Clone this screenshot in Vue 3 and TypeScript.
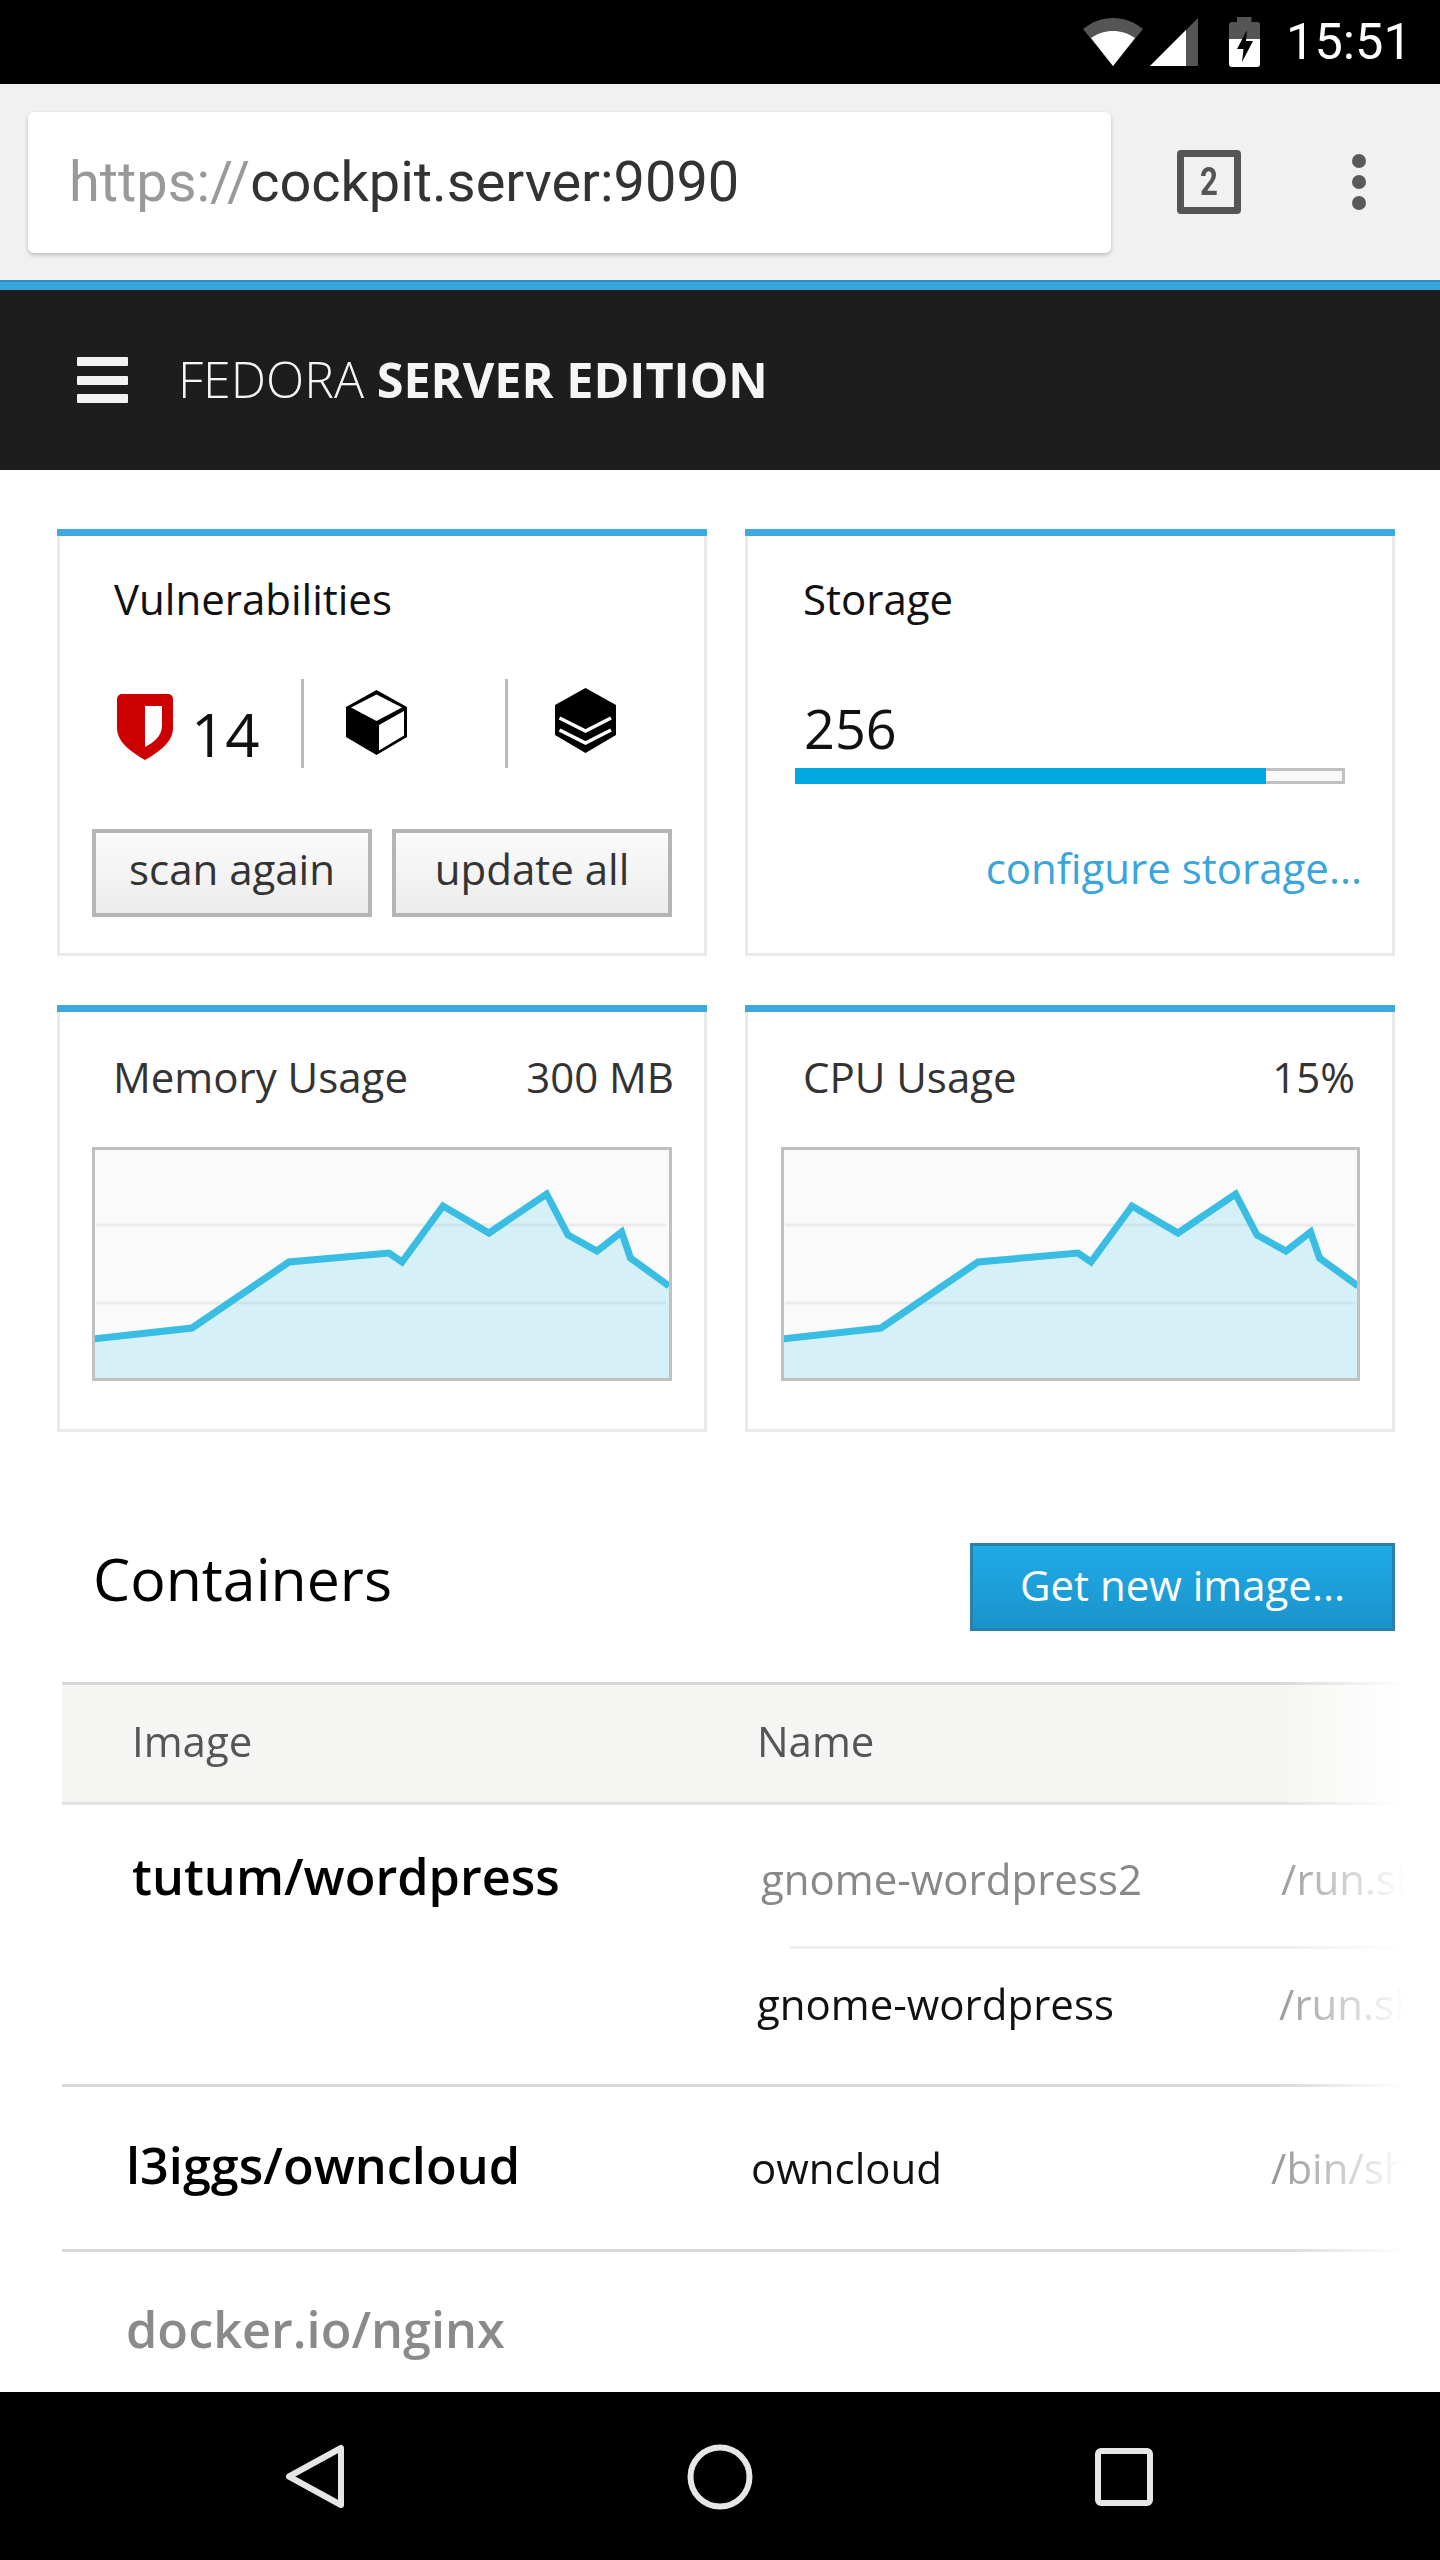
<script setup lang="ts">
interface UsageCard { title: string; value: string }
const usage: UsageCard[] = [
  { title: 'Memory Usage', value: '300 MB' },
  { title: 'CPU Usage', value: '15%' },
]
const pts: [number, number][] = [
  [-2, 189], [97, 178], [194, 112], [294, 103], [307, 112], [348, 56], [394, 83],
  [451.6, 44], [473, 85], [502, 101], [526.6, 82], [535.5, 108], [574, 136],
]
const line = pts.map((p) => p.join(',')).join(' ')
const area = `-2,228 ${line} 574,228`
</script>

<template>
  <div class="page">
    <div class="status">
      <svg class="wifi" width="60" height="48" viewBox="0 0 60 48">
        <path d="M30 48 0 11C18-3.600 42-3.600 60 11Z" fill="#555" />
        <path d="M30 48 8 20C21 10.500 39 10.500 52 20Z" fill="#fff" />
      </svg>
      <svg class="signal" width="48" height="48" viewBox="0 0 48 48">
        <path d="M0 48 48 0V48Z" fill="#555" />
        <path d="M0 48 36 12V48Z" fill="#fff" />
      </svg>
      <svg class="battery" width="31" height="50" viewBox="0 0 31 50">
        <path d="M8 0H22.500V5H28a3 3 0 0 1 3 3V22H0V8a3 3 0 0 1 3-3H8Z" fill="#555" />
        <path d="M0 22H31V47a3 3 0 0 1-3 3H3a3 3 0 0 1-3-3Z" fill="#fff" />
        <path d="M18 13 8 32H14.500L13 45 24 24H17Z" fill="#000" />
      </svg>
      <span class="clock">15:51</span>
    </div>

    <div class="toolbar">
      <div class="url"><span class="scheme">https://</span>cockpit.server:9090</div>
      <div class="tabs"><span>2</span></div>
      <div class="dots"><i></i><i></i><i></i></div>
    </div>

    <header class="brand">
      <div class="burger"><i></i><i></i><i></i></div>
      <div class="brand-name"><span class="light">FEDORA</span> <b>SERVER EDITION</b></div>
    </header>

    <div class="cards">
      <section class="card">
        <div class="card-top"></div>
        <div class="card-body">
          <h3 class="title vuln-title">Vulnerabilities</h3>
          <div class="stats">
            <div class="stat stat-a">
              <svg class="shield" width="56" height="66" viewBox="0 0 56 66">
                <path d="M5 0H51a5 5 0 0 1 5 5V34C56 48 42 58 28 66 14 58 0 48 0 34V5A5 5 0 0 1 5 0Z" fill="#cc0000" />
                <path d="M28 12H45V32C45 42 36 49 28 53Z" fill="#fff" />
              </svg>
              <span class="count">14</span>
            </div>
            <div class="stat stat-b">
              <svg class="cube" width="61" height="65" viewBox="0 0 61 65">
                <path d="M30.500 0 61 17V47L30.500 65 0 47V17Z" fill="#000" />
                <path d="M30.500 4.500 56 17.500 30.500 31 5 17.500Z" fill="#fff" />
                <path d="M58 21V45.500L33 60.500V35Z" fill="#fff" />
              </svg>
            </div>
            <div class="stat stat-c">
              <svg class="layers" width="61" height="65" viewBox="0 0 61 65">
                <path d="M30.500 0 61 17V47L30.500 65 0 47V17Z" fill="#000" />
                <path d="M4.500 30 30.500 43 56 30M4.500 42 30.500 55 56 42" fill="none" stroke="#fff" stroke-width="3.500" />
              </svg>
            </div>
          </div>
          <div class="actions">
            <button class="btn">scan again</button>
            <button class="btn">update all</button>
          </div>
        </div>
      </section>

      <section class="card">
        <div class="card-top"></div>
        <div class="card-body storage">
          <h3 class="title storage-title">Storage</h3>
          <div class="storage-value">256</div>
          <div class="progress"><div class="progress-fill"></div></div>
          <a class="link">configure storage...</a>
        </div>
      </section>

      <section v-for="(c, i) in usage" :key="c.title" class="card">
        <div class="card-top"></div>
        <div class="card-body usage" :class="i === 1 ? 'usage-cpu' : ''">
          <div class="usage-head">
            <span>{{ c.title }}</span>
            <span>{{ c.value }}</span>
          </div>
          <div class="chart">
            <svg width="574" height="228" viewBox="0 0 574 228">
              <path d="M1 75H571M1 153H571" stroke="#ebebeb" stroke-width="3" />
              <polygon :points="area" fill="rgba(31,194,237,.16)" />
              <polyline :points="line" fill="none" stroke="#39bde3" stroke-width="7" />
            </svg>
          </div>
        </div>
      </section>
    </div>

    <div class="section-head">
      <h2>Containers</h2>
      <button class="primary">Get new image...</button>
    </div>

    <div class="table">
      <div class="thead">
        <span class="th-image">Image</span>
        <span class="th-name">Name</span>
      </div>
      <div class="row row-a">
        <div class="image">tutum/wordpress</div>
        <div class="names">
          <div class="sub sub-1">
            <span class="nm dim">gnome-wordpress2</span>
            <span class="cmd">/run.sh</span>
          </div>
          <div class="sub-line"></div>
          <div class="sub sub-2">
            <span class="nm">gnome-wordpress</span>
            <span class="cmd">/run.sh</span>
          </div>
        </div>
      </div>
      <div class="row row-b">
        <div class="image">l3iggs/owncloud</div>
        <span class="nm own">owncloud</span>
        <span class="cmd">/bin/sh</span>
      </div>
      <div class="row-c">
        <div class="image">docker.io/nginx</div>
      </div>
    </div>

    <nav class="nav">
      <svg class="nav-back" width="60" height="65" viewBox="0 0 60 65">
        <path d="M56 4V61L4 32.500Z" fill="none" stroke="#e6e6e6" stroke-width="6" stroke-linejoin="round" />
      </svg>
      <svg class="nav-home" width="66" height="66" viewBox="0 0 66 66">
        <circle cx="33" cy="33" r="29.500" fill="none" stroke="#e6e6e6" stroke-width="6" />
      </svg>
      <svg class="nav-recent" width="58" height="58" viewBox="0 0 58 58">
        <rect x="3" y="3" width="52" height="52" rx="3" fill="none" stroke="#e6e6e6" stroke-width="6" />
      </svg>
    </nav>
  </div>
</template>

<style scoped>
.page {
  width: 1440px;
  height: 2560px;
  display: flex;
  flex-direction: column;
  overflow: hidden;
  background: #fff;
  font-family: "Open Sans", sans-serif;
  font-size: 42px;
  line-height: 54px;
  color: #111;
}
.status {
  height: 84px;
  flex: none;
  background: #000;
  display: flex;
  position: relative;
}
.wifi { margin: 18px 0 0 1083px; }
.signal { margin: 18px 0 0 7px; }
.battery { margin: 17px 0 0 31px; }
.clock {
  margin-left: 26px;
  font: 50.500px/84px Roboto, sans-serif;
  color: #fff;
}
.toolbar {
  height: 196px;
  flex: none;
  background: #f1f1f1;
  display: flex;
  align-items: flex-start;
}
.url {
  margin: 28px 0 0 28px;
  width: 1083px;
  height: 141px;
  box-sizing: border-box;
  padding-left: 41px;
  background: #fff;
  border-radius: 6px;
  box-shadow: 0 2px 4px rgba(0, 0, 0, .22);
  font: 400 55.900px/141px Roboto, sans-serif;
  color: #333;
}
.scheme { color: #999; }
.tabs {
  margin: 66px 0 0 66px;
  width: 64px;
  height: 64px;
  box-sizing: border-box;
  border: 7px solid #555;
  border-radius: 4px;
  display: flex;
  align-items: center;
  justify-content: center;
  font: 700 38px/50px Roboto, sans-serif;
  color: #555;
}
.tabs span { display: block; transform: scaleX(.82); }
.dots { margin: 70px 0 0 111px; display: flex; flex-direction: column; gap: 7px; }
.dots i { display: block; width: 14px; height: 14px; border-radius: 50%; background: #5a5a5a; }
.brand {
  height: 180px;
  flex: none;
  box-sizing: content-box;
  border-top: 10px solid #39a5dc;
  background: #1d1d1d;
  display: flex;
  align-items: center;
  color: #f5f5f5;
  position: relative;
}
.brand::before {
  content: "";
  position: absolute;
  left: 0;
  right: 0;
  top: -10px;
  height: 2px;
  background: #2a8fc4;
}
.burger { margin-left: 77px; width: 51px; display: flex; flex-direction: column; gap: 9.500px; }
.burger i { display: block; height: 9px; border-radius: 1px; background: #f2f2f2; }
.brand-name { margin: -2px 0 0 50px; font-size: 48.600px; line-height: 60px; }
.light { font-weight: 300; font-size: 50px; }
.brand-name b { font-weight: 700; }
.cards {
  flex: none;
  padding: 59px 45px 0 57px;
  display: grid;
  grid-template-columns: 650px 650px;
  column-gap: 38px;
  row-gap: 49px;
}
.card { height: 427px; display: flex; flex-direction: column; }
.card-top { height: 7px; flex: none; background: #3fa9dd; }
.card-body {
  flex: 1;
  border: 3px solid #e9e9e9;
  border-top: none;
  min-height: 0;
}
.title { margin: 0; font-size: 42px; line-height: 54px; font-weight: 400; color: #111; }
.vuln-title { padding: 36px 0 0 54px; }
.stats { display: flex; height: 89px; margin-top: 53px; }
.stat { display: flex; box-sizing: border-box; flex: none; align-items: flex-start; }
.stat-a { width: 241px; padding: 15px 0 0 57px; }
.stat-b { width: 204px; border-left: 3px solid #bbb; padding: 11px 0 0 42px; }
.stat-c { flex: 1; border-left: 3px solid #bbb; padding: 9px 0 0 47px; }
.stat-b, .stat-c { height: 89px; }
.count { margin: 0 0 0 18px; font-size: 60px; line-height: 80px; font-weight: 400; color: #111; }
.actions { display: flex; gap: 20px; padding-left: 32px; margin-top: 61px; }
.btn {
  width: 280px;
  height: 88px;
  padding: 0 0 8px;
  box-sizing: border-box;
  border: 4px solid #b5b5b5;
  background: linear-gradient(#fbfbfb, #ececec);
  font: 42px/54px "Open Sans", sans-serif;
  color: #333;
}
.storage { display: flex; flex-direction: column; }
.storage-title { padding: 36px 0 0 55px; }
.storage-value { margin: 72px 0 0 56px; font-size: 54px; line-height: 60px; }
.progress {
  margin: 10px 0 0 47px;
  width: 550px;
  height: 16px;
  box-sizing: border-box;
  border: 3px solid #c0c0c0;
  background: #fafafa;
  position: relative;
}
.progress-fill {
  position: absolute;
  left: -3px;
  top: -3px;
  bottom: -3px;
  width: 471px;
  background: #00a8e1;
}
.link {
  margin: 57px 30px 0 0;
  align-self: flex-end;
  color: #39a5dc;
}
.usage-head {
  display: flex;
  justify-content: space-between;
  padding: 38px 30px 0 53px;
  color: #333;
}
.usage-cpu .usage-head { padding-right: 37px; padding-left: 55px; }
.chart {
  margin: 43px 0 0 32px;
  width: 580px;
  height: 234px;
  box-sizing: border-box;
  border: 3px solid #c0c0c0;
  background: #fafafa;
  overflow: hidden;
}
.usage-cpu .chart { margin-left: 33px; width: 579px; }
.chart svg { display: block; }
.section-head {
  flex: none;
  height: 88px;
  margin-top: 111px;
  padding: 0 45px 0 93px;
  display: flex;
  justify-content: space-between;
}
.section-head h2 { margin: -6px 0 0; font-size: 59px; line-height: 82px; font-weight: 400; color: #000; }
.primary {
  width: 425px;
  height: 88px;
  padding: 0 0 5px;
  box-sizing: border-box;
  border: 3px solid #2a7fab;
  background: linear-gradient(#1fabe6, #1b93cb);
  color: #fff;
  font: 42px/54px "Open Sans", sans-serif;
}
.table {
  flex: 1;
  min-height: 0;
  margin: 51px 36px 0 62px;
  -webkit-mask-image: linear-gradient(to right, #000 calc(100% - 125px), transparent);
  mask-image: linear-gradient(to right, #000 calc(100% - 125px), transparent);
  overflow: hidden;
}
.thead {
  height: 88px;
  border-top: 3px solid #d9d9d9;
  border-bottom: 3px solid #e2e2e2;
  background: #f5f5f3;
  display: flex;
  color: #555;
  padding-top: 29px;
  box-sizing: content-box;
}
.th-image { margin-left: 70px; width: 625px; }
.row { display: flex; border-bottom: 3px solid #d9d9d9; }
.image { font-size: 50.400px; line-height: 68px; font-weight: 600; color: #000; }
.row-a { height: 279px; padding-left: 70px; }
.row-a .image { margin-top: 37px; width: 625px; flex: none; }
.names { flex: 1; }
.sub { display: flex; }
.sub-1 { padding: 46px 0 0 4px; height: 95px; box-sizing: content-box; }
.sub-line { height: 3px; margin-left: 33px; background: #eee; }
.sub-2 { padding-top: 27px; }
.nm { font-size: 42px; line-height: 56px; color: #111; }
.sub-1 .nm { width: 520px; flex: none; }
.sub-2 .nm { width: 522px; flex: none; }
.dim { color: #888; }
.cmd { font-size: 42px; line-height: 56px; color: #999; white-space: nowrap; }
.row-b { height: 162px; padding-left: 64px; }
.row-b .image { margin-top: 44px; width: 625px; flex: none; }
.own { margin-top: 53px; width: 520px; flex: none; }
.row-b .cmd { margin-top: 53px; }
.row-c { padding: 43px 0 0 64px; }
.row-c .image { color: #8a8a88; }
.nav { height: 168px; flex: none; background: #000; display: flex; align-items: flex-start; }
.nav-back { margin: 52px 0 0 285px; }
.nav-home { margin: 52px 0 0 342px; }
.nav-recent { margin: 56px 0 0 342px; }
</style>
